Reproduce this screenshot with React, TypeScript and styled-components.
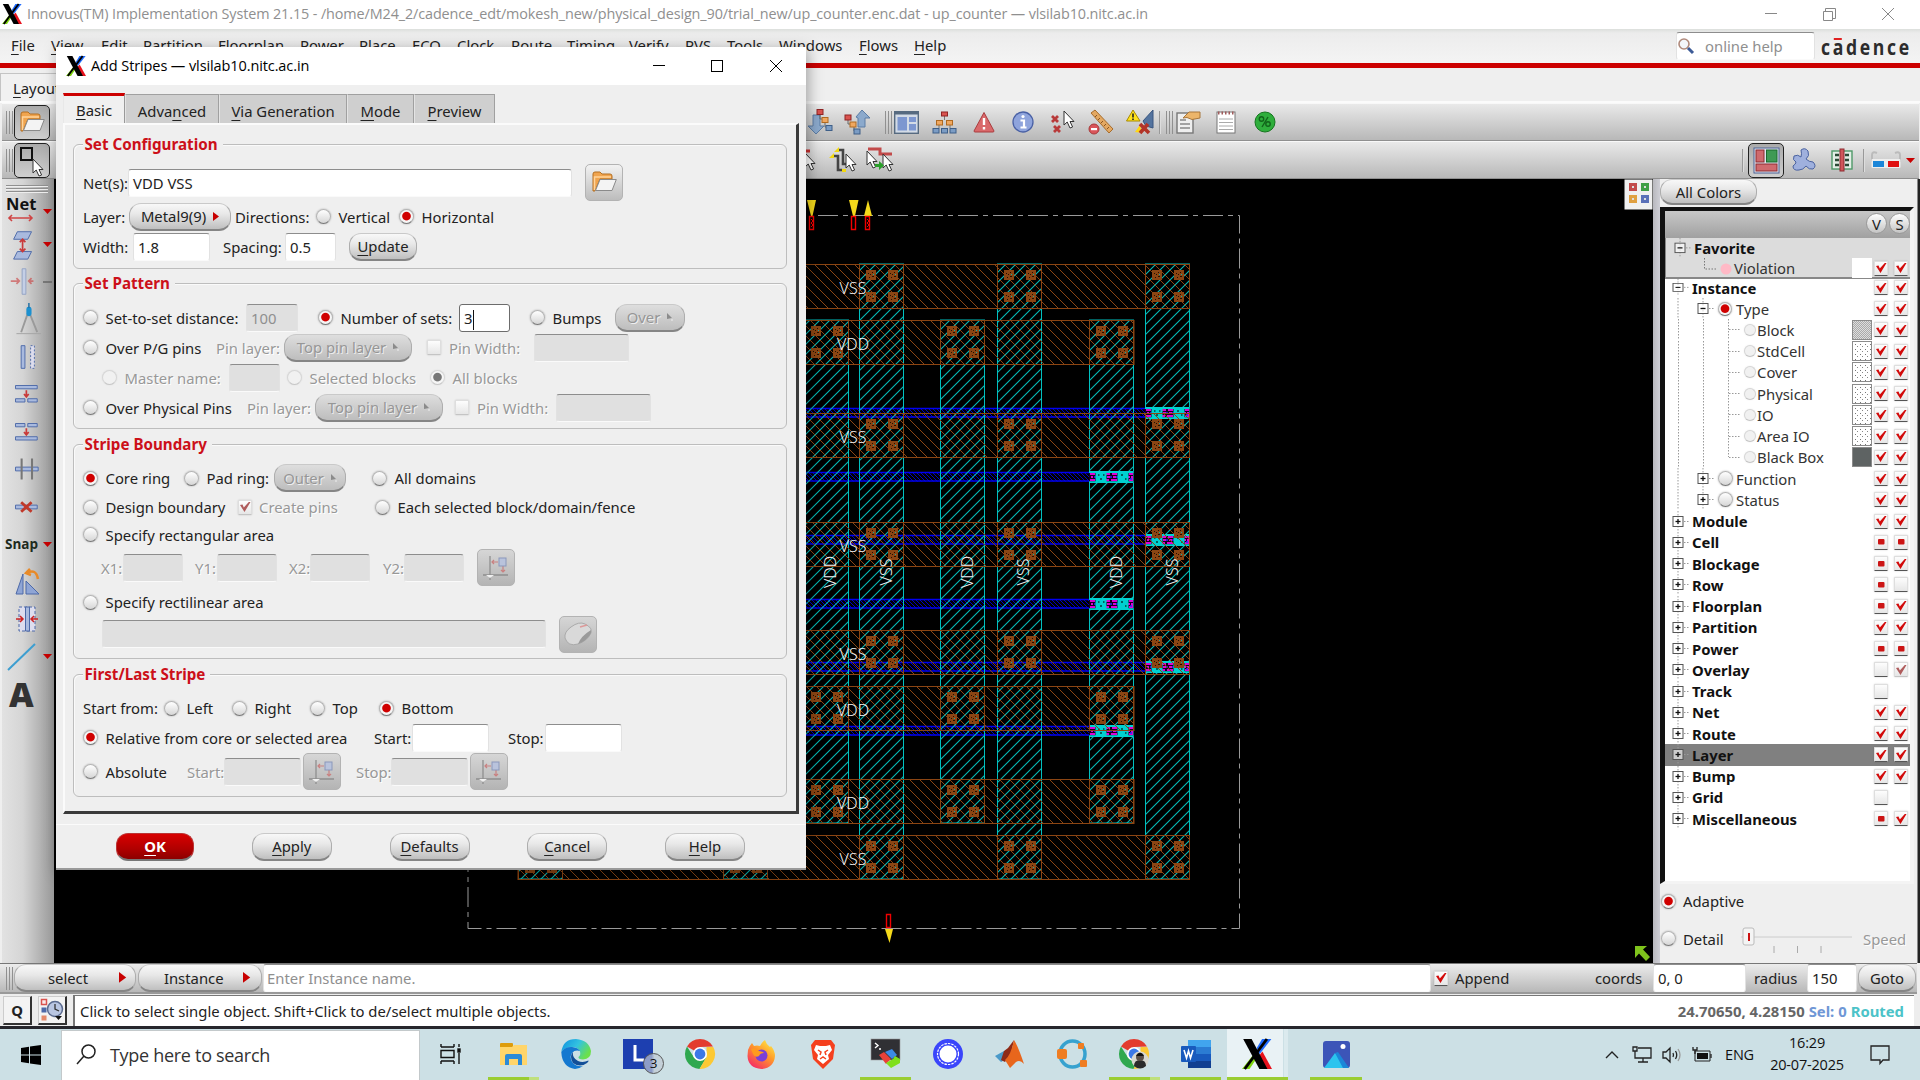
import React from 'react';
import styled, { createGlobalStyle, css } from 'styled-components';

const UI = '"Noto Sans", "Open Sans", sans-serif';
const WIN = '"Open Sans", "Noto Sans", sans-serif';

const Global = createGlobalStyle`
  * { box-sizing: border-box; }
  html, body { margin: 0; padding: 0; background: #efefef; }
  body { width: 1920px; height: 1080px; overflow: hidden; }
  svg { display: block; flex: none; overflow: visible; }
  u { text-underline-offset: 3px; text-decoration-thickness: 1px; text-decoration-skip-ink: none; }
`;

const Screen = styled.div`
  position: relative;
  width: 1920px;
  height: 1080px;
  display: flex;
  flex-direction: column;
  overflow: hidden;
  background: #efefef;
  font: 14.85px/20px ${UI};
  color: #222;
  white-space: nowrap;
`;

/* ---------- generic parts ---------- */
const Cell = styled.div<{ $w?: number; $dim?: boolean; $h?: number }>`
  flex: none;
  display: flex;
  align-items: center;
  width: ${p => (p.$w ? `${p.$w}px` : 'auto')};
  ${p => p.$h && `height: ${p.$h}px;`}
  ${p => p.$dim && 'color: #989898; text-shadow: 1px 1px 0 #fff;'}
`;
const Slot = styled(Cell)`justify-content: center;`;
const Grow = styled.div`flex: 1;`;

const Radio = styled.i<{ $on?: boolean; $dim?: boolean; $s?: number }>`
  flex: none;
  width: ${p => p.$s || 15}px;
  height: ${p => p.$s || 15}px;
  border-radius: 50%;
  border: 1px solid ${p => (p.$dim ? '#d6d6d6' : '#b4b4b4')};
  border-bottom-color: ${p => (p.$dim ? '#c6c6c6' : '#777')};
  background: ${p =>
    p.$on
      ? `radial-gradient(circle at 50% 47%, ${p.$dim ? '#777' : '#d00000'} 0 3.8px, transparent 4.8px), #f6f6f6`
      : p.$dim ? '#f1f1f1' : 'linear-gradient(#fff, #d6d6d6)'};
  box-shadow: 0 0 2px rgba(0, 0, 0, ${p => (p.$dim ? 0.08 : 0.3)});
`;

const CheckBox = styled.i<{ $dim?: boolean }>`
  flex: none;
  display: flex;
  align-items: center;
  justify-content: center;
  width: 14px;
  height: 15px;
  border-radius: 1px;
  border: 1px solid #dedede;
  border-bottom: 1px solid ${p => (p.$dim ? '#c4c4c4' : '#555')};
  background: linear-gradient(#fdfdfd, #e6e6e6);
  box-shadow: 0 0 2px rgba(0, 0, 0, 0.18);
`;

type Mark = 'v' | 's' | 'o' | 'd' | '';
const Check = ({ m = '' as Mark, dim = false }) => (
  <CheckBox $dim={dim || m === 'd'}>
    {(m === 'v' || m === 'd') && (
      <svg width="12" height="12" viewBox="0 0 12 12">
        <path d="M1 4 L3.500 3.500 L4.800 6.500 L9.800 1 H11.500 L5.500 11 Z" fill={m === 'd' ? '#b05c5c' : '#d20a0a'} />
      </svg>
    )}
    {m === 's' && (
      <svg width="8" height="6"><rect x="1" width="6.5" height="5.5" rx="1" fill="#cc1515" /></svg>
    )}
  </CheckBox>
);

const Field = styled.div<{ $w: number; $off?: boolean; $focus?: boolean; $hint?: boolean }>`
  flex: none;
  width: ${p => p.$w}px;
  height: 28px;
  padding: 0 4px;
  line-height: 26px;
  border-radius: 3px;
  border: 1px solid #e2e2e2;
  border-top: 1.5px solid #8d8d8d;
  border-bottom-color: #fafafa;
  background: ${p => (p.$off ? '#e0e0e0' : '#fff')};
  color: ${p => (p.$off || p.$hint ? '#8f8f8f' : '#222')};
  ${p => p.$focus && 'border: 1.5px solid #6c6c6c; padding-left: 4px;'}
  ${p => p.$hint && 'padding-left: 3px;'}
`;
const Caret = styled.span`
  display: inline-block;
  width: 1px;
  height: 20px;
  background: #111;
  vertical-align: middle;
`;

const Pill = styled.div<{ $w: number; $off?: boolean; $h?: number; $red?: boolean }>`
  flex: none;
  display: flex;
  align-items: center;
  justify-content: center;
  gap: 7px;
  width: ${p => p.$w}px;
  height: ${p => p.$h || 28}px;
  border-radius: 12px;
  border: 1px solid #adadad;
  border-top-color: #c9c9c9;
  border-bottom: 2px solid #858585;
  background: linear-gradient(#f8f8f8, #e8e8e8 40%, #bfbfbf);
  ${p => p.$off && 'background: linear-gradient(#dedede, #bdbdbd); color: #969696; text-shadow: 1px 1px 0 #eee;'}
  ${p => p.$red && 'background: linear-gradient(#d80000, #b00000 60%, #8c0000); color: #fff; font-weight: 700; border-color: #b33; border-bottom-color: #777;'}
`;
const PillText = styled.div<{ $w: number; $pl: number }>`width: ${p => p.$w}px; padding-left: ${p => p.$pl}px;`;
const Tri = ({ c = '#c80000', s = 1 }) => (
  <svg width={6 * s} height={9 * s} viewBox="0 0 6 9"><path d="M0 0 L6 4.5 L0 9Z" fill={c} /></svg>
);
const OffTri = () => (
  <svg width="6" height="8" viewBox="0 0 6 8"><path d="M0 0 L5 5 L0 6Z" fill="#8b8b8b" /><path d="M5 6v2" stroke="#eee" /></svg>
);
const DownTri = () => (
  <svg width="9" height="5" viewBox="0 0 9 5"><path d="M0 0H9L4.5 5Z" fill="#c80000" /></svg>
);

const IconButton = styled.div<{ $off?: boolean }>`
  flex: none;
  display: flex;
  align-items: center;
  justify-content: center;
  width: 38px;
  height: 37px;
  border-radius: 5px;
  border: 1px solid #b3b3b3;
  background: ${p => (p.$off ? 'linear-gradient(#d6d6d6, #b4b4b4)' : 'linear-gradient(#f2f2f2, #bcbcbc)')};
`;

/* ---------- icons ---------- */
const XLogo = ({ w = 20, h = 20 }) => (
  <svg width={w} height={h} viewBox="0 0 20 20">
    <path d="M0 20 L8.4 9.4 L10 12.6 L5 20Z" fill="#7fd60f" />
    <path d="M13.4 0 H19.6 L11.8 10 L9.8 6Z" fill="#1e6bff" />
    <path d="M11.5 11 L13.6 8.4 L20 20 H14.5Z" fill="#e8111c" />
    <path d="M0.8 0 H6.4 L17 20 H11.6Z" fill="#000" />
    <path d="M1.8 20 L16.6 0" stroke="#000" strokeWidth="1.9" />
  </svg>
);
const Folder = () => (
  <svg width="25" height="23" viewBox="0 0 25 23">
    <path d="M1 20 V3 Q1 1 3 1 H8 L10 3 H18 Q20 3 20 5 V8 H8 L3 20Z" fill="#f0a44e" stroke="#b36f22" />
    <path d="M2.5 19 V6 H19" fill="none" stroke="#ffd49a" strokeWidth="1.5" />
    <path d="M8 8.5 H24.3 L20 19.5 H3.5Z" fill="#f4f4f4" stroke="#8a8a8a" />
  </svg>
);
const AxisIcon = () => (
  <svg width="26" height="26" viewBox="0 0 26 26" fill="none">
    <path d="M7 1 V25 M0 20 H25" stroke="#8f8f8f" strokeWidth="1.3" />
    <path d="M7 23l-4-3h8z" fill="#f0f0f0" />
    <path d="M9 7 H15 M11 5 L9 7 L11 9 M20 11 V17 M18 15 L20 17 L22 15" stroke="#c98080" strokeWidth="1.2" />
    <rect x="16" y="3" width="7" height="8" fill="#b9c3dc" stroke="#8b98bb" />
  </svg>
);
const MouseIcon = () => (
  <svg width="30" height="26" viewBox="0 0 30 26">
    <path d="M2 17 Q1 11 8 6 Q16 0 22 3 Q30 7 28 12 Q24 20 15 23 Q5 26 2 17Z" fill="#d9d9d9" stroke="#aaa" />
    <path d="M28 12 Q24 20 15 23 Q18 15 28 9Z" fill="#9a9a9a" />
    <path d="M17 6 L24 4" stroke="#d99" strokeWidth="1.5" />
  </svg>
);
const Cursor = ({ x = 0, y = 0 }) => (
  <path transform={`translate(${x} ${y})`} d="M0 0 V14 L3.2 11 L6 17 L8.6 16 L6 10.5 H10Z" fill="#fff" stroke="#333" strokeWidth="1" />
);
const Tree = ({ up = false }) => (
  <svg width="27" height="26" viewBox="0 0 27 26">
    <path d={up ? 'M12 8 L18 1 L26 9 H21 V18 H14 V9Z' : 'M6 6 H13 V17 H17 L9 25 L1 17 H6Z'} fill="#8ba9cc" stroke="#5c7da5" />
    <path d={up ? 'M4 8 V15 H9 M10 16 V22 H13' : 'M13 4 V10 H17 M18 12 V18 H22'} fill="none" stroke="#666" />
    <rect x={up ? 1 : 10} y={up ? 6 : 0.5} width="6" height="5" fill="#d9534f" stroke="#8f2424" />
    <rect x={up ? 6 : 15} y={up ? 13 : 8.5} width="6" height="5" fill="#f0a860" stroke="#b06a20" />
    <rect x={up ? 10 : 19} y={up ? 20 : 16.5} width="6" height="5" fill="#7b9cc4" stroke="#3e5f88" />
  </svg>
);
const WindowIcon = () => (
  <svg width="25" height="23" viewBox="0 0 25 23">
    <rect x=".7" y=".7" width="23.6" height="21.6" fill="#d3dbe6" stroke="#566a80" strokeWidth="1.4" />
    <path d="M0 2 H25" stroke="#566a80" strokeWidth="3" />
    <rect x="3.5" y="6" width="9.5" height="13.5" fill="#7d97d0" /><rect x="15" y="6" width="7" height="5" fill="#7d97d0" /><rect x="15" y="13" width="7" height="6.5" fill="#7d97d0" />
  </svg>
);
const HierIcon = () => (
  <svg width="25" height="23" viewBox="0 0 25 23">
    <path d="M12.500 5V9M7 14V17M18 14V17" stroke="#777" />
    <rect x="9.500" y="1" width="6" height="4" fill="#d9534f" stroke="#8f2424" />
    {[4.5, 14.5].map(x => <rect key={x} x={x} y="9.500" width="6" height="4.500" fill="#f0a860" stroke="#b06a20" />)}
    {[1, 9.5, 18].map(x => <rect key={x} x={x} y="17.500" width="6" height="4.500" fill="#7b9cc4" stroke="#3e5f88" />)}
  </svg>
);
const WarnIcon = () => (
  <svg width="22" height="22" viewBox="0 0 22 22">
    <path d="M11 1.500 L21 20 Q21 21 20 21 H2 Q1 21 1 20Z" fill="#d9696b" stroke="#a93c3e" />
    <path d="M11 7 V14 M11 16 V18.500" stroke="#fff" strokeWidth="2.400" />
  </svg>
);
const InfoIcon = () => (
  <svg width="22" height="22" viewBox="0 0 22 22">
    <circle cx="11" cy="11" r="10" fill="#8fa4dc" stroke="#4a61a5" strokeWidth="1.300" />
    <path d="M8.500 9.500H12V16M8.500 16.500H14.500" fill="none" stroke="#fff" strokeWidth="2.200" /><circle cx="11" cy="5.500" r="1.600" fill="#fff" />
  </svg>
);
const XXIcon = () => (
  <svg width="24" height="24" viewBox="0 0 24 24">
    <path d="M2 6 L8 12 M8 6 L2 12 M4 16 L10 22 M10 16 L4 22" stroke="#b83a3a" strokeWidth="2.800" />
    <Cursor x={14} y={1} />
  </svg>
);
const RulerIcon = () => (
  <svg width="26" height="26" viewBox="0 0 26 26">
    <path d="M3 4 L7 1 L25 20 L21 24Z" fill="#e3a862" stroke="#a66c2c" />
    <path d="M9 6l-2 2M12 9l-2 2M15 12l-2 2M18 15l-2 2M21 18l-2 2" stroke="#8a5520" />
    <circle cx="6" cy="20" r="5" fill="#d9545a" stroke="#a83a3a" /><rect x="3" y="19" width="6" height="2.200" fill="#fff" />
  </svg>
);
const AlertPen = () => (
  <svg width="28" height="26" viewBox="0 0 28 26">
    <path d="M17 12 L27 1 V19 L20 17Z" fill="#54749f" stroke="#3a5680" />
    <path d="M9 23 L14 16 L16 24Z" fill="#ffd814" />
    <path d="M14 15 L23 24 M22 15 L14 24" stroke="#b23428" strokeWidth="3.600" />
    <path d="M7 1 L14 12 H0.500Z" fill="#ffe11a" stroke="#a88a00" /><path d="M7 4.500V8.500M7 9.500V11" stroke="#222" strokeWidth="1.600" />
  </svg>
);
const NoteHand = () => (
  <svg width="24" height="24" viewBox="0 0 24 24">
    <rect x="1" y="3" width="16" height="20" fill="#eee" stroke="#777" strokeWidth="1.400" />
    <path d="M4 10H10M4 14H14M4 18H14" stroke="#888" strokeWidth="1.400" />
    <path d="M7 8 L13 2 H24 V8 L16 9.500 L11 7.500Z" fill="#ecb56a" stroke="#a8763a" />
  </svg>
);
const NotePad = () => (
  <svg width="20" height="24" viewBox="0 0 20 24">
    <rect x="1" y="2" width="18" height="21" fill="#fff" stroke="#777" />
    <path d="M3 9H17M3 12.500H17M3 16H17M3 19.500H17" stroke="#aaa" /><path d="M2 3H18" stroke="#a05a5a" strokeWidth="3" strokeDasharray="1.500 2" />
  </svg>
);
const Globe = () => (
  <svg width="22" height="22" viewBox="0 0 22 22">
    <circle cx="11" cy="11" r="10" fill="#2fae3c" stroke="#16761f" /><circle cx="7.500" cy="8" r="2.200" fill="none" stroke="#11641a" strokeWidth="1.400" />
    <circle cx="14" cy="13" r="2.200" fill="none" stroke="#11641a" strokeWidth="1.400" /><path d="M14 6 L8 16" stroke="#11641a" strokeWidth="1.400" />
  </svg>
);

/* ---------- title, menu, toolbars ---------- */
const TitleBar = styled.div`
  flex: none; display: flex; align-items: center; height: 29px; background: #fff;
  padding: 0 0 1px 2px; font: 14.4px/20px ${WIN}; letter-spacing: -0.11px; color: #8f8f8f; gap: 5px;
`;
const MenuBar = styled.div`
  flex: none; display: flex; align-items: center; height: 34px; padding: 0 0 1px 11px;
  background: linear-gradient(#dcdfdc, #ececec 12%, #f4f4f4);
`;
const MenuItem = styled(Cell)`padding-bottom: 2px;`;
const Search = styled(Field)`
  display: flex; align-items: center; gap: 11px; padding: 0 1px; color: #8f8f8f; margin-right: 6px;
`;
const Brand = styled.div`
  position: relative; font: 700 22px/24px "Open Sans", sans-serif; letter-spacing: 3.3px; color: #2c2c2c; transform-origin: left; 
  transform: scaleX(0.8); width: 99px;
`;
const Macron = styled.i`position: absolute; left: 16px; top: 4px; width: 10px; height: 2px; background: #e02020;`;
const RedLine = styled.div`flex: none; height: 5px; background: #cc0000;`;
const TabStrip = styled.div`
  flex: none; display: flex; align-items: flex-end; height: 35px; background: #efefef; border-bottom: 2px solid #fbfbfb;
`;
const LayoutTab = styled.div`
  width: 60px; height: 28px; padding: 4px 0 0 12px; border: 1px solid #c4c4c4; border-bottom: 0; background: #f1f1f1;
`;
const Bar = styled.div`
  flex: none; display: flex; align-items: center; height: 38px; width: 1917px; margin-left: 2px;
  background: linear-gradient(#e9e9e9, #b8b8b8); border-bottom: 1px solid #8f8f8f; border-top: 1px solid #f8f8f8;
`;
const Grip = styled.i<{ $h?: boolean }>`
  flex: none; width: 7px; height: 23px; margin: 0 1px 0 4px;
  background: repeating-linear-gradient(90deg, #909090 0 1px, transparent 1px 3px);
  ${p => p.$h && css`width: 42px; height: 8px; background: repeating-linear-gradient(#909090 0 1px, #eee 1px 2px, transparent 2px 3px);`}
`;
const Sep = styled.i`flex: none; width: 2px; height: 23px; background: #999; border-right: 1px solid #ddd;`;
const Pressed = styled.div`
  flex: none; display: flex; align-items: center; justify-content: center; width: 36px; height: 35px;
  border: 1.5px solid #222; border-radius: 5px; background: linear-gradient(#aaa, #cfcfcf);
`;

/* ---------- body ---------- */
const Body = styled.div`flex: none; display: flex; height: 784px; width: 1920px;`;
const SideBar = styled.div`
  flex: none; display: flex; flex-direction: column; align-items: flex-start; width: 52px; margin-left: 2px; padding: 6px 0 0 0;
  background: linear-gradient(90deg, #e2e2e2, #d5d5d5 40%, #989898);
`;
const Tool = styled.div<{ $pl?: number; $h?: number; $pt?: number }>`
  display: flex; align-items: center; width: 52px; height: ${p => p.$h || 37.5}px; padding: ${p => p.$pt || 0}px 2px 0 ${p => p.$pl || 5}px;
  justify-content: space-between;
`;
const ToolText = styled.div<{ $s: number }>`
  font: ${p => (p.$s > 25 ? 800 : 700)} ${p => p.$s}px/16px "Open Sans", sans-serif; color: ${p => (p.$s > 25 ? '#333' : '#1d2a1d')};
`;
const Splitter = styled.div`flex: none; width: 7px; background: linear-gradient(90deg, #b8b8be, #cfcfd6);`;
const Viewport = styled.div`flex: none; display: flex; width: 1599px; height: 784px; background: #000;`;

const Side = styled.div`
  flex: none; width: 257px; display: flex; flex-direction: column; background: #efefef;
`;
const Edge = styled.div`flex: none; width: 3px; background: #222; border-left: 1px solid #888;`;
const TreeBox = styled.div`
  margin-top: 2px; width: 254px; height: 677px; border-left: 5px solid #111; border-top: 4px solid #111; border-right: 4px solid #f4f4f4;
  border-bottom: 3px solid #f4f4f4; background: #fff; display: flex; flex-direction: column;
`;
const TreeHead = styled.div`
  flex: none; height: 27px; background: linear-gradient(#c8c8c8, #a0a0a0); display: flex; align-items: center; justify-content: flex-end; gap: 2px;
  padding-bottom: 2px;
`;
const Knob = styled.div`
  width: 21px; height: 21px; border-radius: 50%; border: 1px solid #999; background: linear-gradient(#fff, #c4c4c4); text-align: center; line-height: 20px;
`;
const TreeRow = styled.div<{ $bg?: string; $bold?: boolean; $h?: number; $pb?: number }>`
  flex: none; display: flex; align-items: center; height: ${p => p.$h || 21.25}px; padding: 0 2px ${p => p.$pb || 0}px 0; background: ${p => p.$bg || 'transparent'};
  font-weight: ${p => (p.$bold ? 700 : 400)}; color: ${p => (p.$bold ? '#111' : '#333')};
`;
const Fav = styled.div`background: #dcdcdc; border-bottom: 2px solid #888; border-left: 1px solid #888; height: 41px;`;
const Twig = ({ l, open, mid, h = 21.25 }: { l: number; open?: boolean; mid?: boolean; h?: number }) => (
  <svg width={l + 16} height={h} viewBox={`0 0 ${l + 16} 21.25`} preserveAspectRatio="none">
    <path d={`M${l + 4} 0V21`} stroke="#999" strokeDasharray="1.5 1.5" />
    {l > 20 && mid && <path d={`M${l - 21} 0V21`} stroke="#999" strokeDasharray="1.5 1.5" />}
    <rect x={l - 1} y="5.500" width="10" height="10" fill="#fff" fillOpacity="0.6" stroke="#555" />
    <path d={`M${l + 1.5} 10.500H${l + 6.5}`} stroke="#111" strokeWidth="1.300" />
    {!open && <path d={`M${l + 4} 8V13`} stroke="#111" strokeWidth="1.300" />}
    <path d={`M${l + 10} 10.500H${l + 16}`} stroke="#999" strokeDasharray="1.5 1.5" />
  </svg>
);
const Leaf = ({ end = false }) => (
  <svg width="75" height="21.25" viewBox="0 0 75 21.25">
    <path d={`M13.500 0V21M38.500 0V21M63.500 0V${end ? 10 : 21}M64 10.500H75`} stroke="#999" strokeDasharray="1.5 1.5" fill="none" />
  </svg>
);
const Swatch = styled.i<{ $k: number }>`
  width: 20px; height: 20px; border: 1px solid #8b8b8b;
  ${p => p.$k === 1 && css`background: repeating-conic-gradient(#aaa 0 25%, #ddd 0 50%) 0 0/2px 2px;`}
  ${p => p.$k === 2 && css`background: radial-gradient(circle, #777 0.7px, transparent 1px) 0 0/5px 5px, radial-gradient(circle, #888 0.7px, transparent 1px) 2px 2px/5px 5px #fff;`}
  ${p => p.$k === 3 && css`background: #5e6363;`}
  ${p => p.$k === 4 && css`background: #fff; border-color: #fff;`}
`;
const Marks = styled.div`display: flex; gap: 6px; width: 35px; margin-left: 1px; padding-left: 1px;`;

/* ---------- lower bars ---------- */
const CmdBar = styled.div`
  flex: none; display: flex; align-items: center; height: 31px; width: 1917px; padding-left: 2px; border-top: 1px solid #777; border-bottom: 2px solid #999;
  background: linear-gradient(#ececec, #b8b8b8);
`;
const StatusBar = styled.div`
  flex: none; display: flex; align-items: center; height: 35px; background: #ededed; border-bottom: 3px solid #26262c; padding-left: 3px;
`;
const SmallBtn = styled.div`
  display: flex; align-items: center; justify-content: center; width: 29px; height: 29px; margin-right: 6px; background: #f3f3f3;
  border: 1px solid #ccc; border-right: 2px solid #333; border-bottom: 2px solid #333; font-weight: 700;
`;
const StatusText = styled.div`
  flex: none; width: 1841px; height: 31px; border-left: 2px solid #777; border-top: 1px solid #777; background: #fff; padding: 0 10px 0 5px;
  display: flex; align-items: center; justify-content: space-between;
`;
const Coord = styled.b<{ $c: string }>`color: ${p => p.$c}; margin-left: 4px;`;

/* ---------- taskbar ---------- */
const TaskBar = styled.div`
  flex: none; display: flex; height: 51px; background: #cce0e5; font-family: ${WIN}; color: #111;
`;
const StartBtn = styled(Slot)`width: 61px;`;
const TaskSearch = styled.div`
  width: 359px; margin-top: 1px; border: 1px solid #c3c9cb; border-bottom: 0; background: #fff; display: flex; align-items: center;
  padding: 0 0 2px 14px; gap: 14px; font-size: 18px; letter-spacing: -0.3px; color: #333;
`;
const TaskApp = styled.div<{ $w: number; $line?: number; $on?: boolean; $stack?: boolean }>`
  flex: none; display: flex; align-items: center; justify-content: center; position: relative; width: ${p => p.$w}px; padding-bottom: 1px;
  ${p => p.$on && 'background: linear-gradient(90deg, transparent 1px, #e9f2f5 1px, #e9f2f5 57px, transparent 57px, transparent 58px, #dbeaee 58px, #dbeaee 62px, transparent 62px);'}
  &::after { content: ''; position: absolute; left: calc(50% - ${p => (p.$stack ? 25 : (p.$line || 0) / 2)}px); bottom: 0; width: ${p => p.$line || 0}px; height: 3px;
    background: ${p => (p.$stack ? 'linear-gradient(90deg, #9acd32 41px, #bfe07c 41px)' : '#9acd32')}; }
`;
const Badge = styled.div`
  position: absolute; left: 36px; top: 24px; width: 21px; height: 21px; border-radius: 50%; border: 1px solid #555; background: linear-gradient(90deg, #8d9cc8 40%, #c4d0d8 55%); text-align: center; font: 13.5px/19px ${WIN};
`;
const Clock = styled.div`width: 90px; text-align: center; font-size: 14.5px; line-height: 22px; padding-top: 3px; letter-spacing: -0.2px;`;
const Lang = styled(Slot)`font-size: 14.5px; letter-spacing: -0.2px;`;

/* ---------- dialog ---------- */
const Dialog = styled.div`
  position: absolute; left: 56px; top: 47px; width: 750px; height: 823px; background: #efefef; box-shadow: 2px 3px 14px rgba(0, 0, 0, 0.35);
  display: flex; flex-direction: column; border-bottom: 2px solid #999;
`;
const DlgTitle = styled.div`
  flex: none; display: flex; align-items: center; height: 38px; padding-left: 10px; background: #fff; font: 14.5px/20px ${WIN}; letter-spacing: -0.1px; color: #000; gap: 5px;
`;
const Tabs = styled.div`display: flex; align-items: flex-end; height: 39px; padding-left: 7px;`;
const Tab = styled.div<{ $w: number; $on?: boolean }>`
  width: ${p => p.$w}px; height: 29px; line-height: 33px; text-align: center; background: #cfcfcf; border: 1px solid #a0a0a0; border-left-color: #e4e4e4; border-bottom: 0;
  ${p => p.$on && 'background: #f0f0f0; border-color: #e8e8e8; border-right-color: #999; border-top: 3px solid #cc0000; height: 30px; line-height: 28px;'}
`;
const Pane = styled.div`
  margin-left: 7px; width: 736px; height: 691px; border-top: 2px solid #fbfbfb; border-left: 2px solid #fbfbfb; border-right: 3px solid #3a3a3a; border-bottom: 3px solid #3a3a3a; padding: 19px 0 0 8px;
`;
const Group = styled.div<{ $h: number; $gap?: number }>`
  position: relative; width: 714px; height: ${p => p.$h}px; margin-bottom: ${p => p.$gap || 15}px; border: 1.5px solid #bdbdbd; border-radius: 6px;
  box-shadow: inset 1px 1px 0 #fafafa; padding-left: 9px;
`;
const Legend = styled.div`
  position: absolute; left: 8.5px; top: -11px; padding: 0 5px 0 2px; background: #efefef; font-weight: 700; font-size: 15.2px; color: #cc1019;
`;
const Row = styled.div<{ $h?: number; $mt?: number; $pl?: number }>`
  display: flex; align-items: center; height: ${p => p.$h || 30}px; margin-top: ${p => p.$mt || 0}px; padding-left: ${p => p.$pl || 0}px;
`;
const Buttons = styled.div`display: flex; align-items: center; margin-top: 10px; border-top: 1px solid #fbfbfb; height: 46px; padding: 1px 61px 0 60px; justify-content: space-between;`;

const Opt = ({ w, on, dim, children }: any) => (
  <Cell $w={w} $dim={dim}>
    <Cell $w={22.5}><Radio $on={on} $dim={dim} /></Cell>
    {children}
  </Cell>
);
const PinWidth = ({ w }: { w: number }) => (
  <Cell $w={w} $dim><Cell $w={22}><Check dim /></Cell>Pin Width:</Cell>
);
const Coords = ({ l, w, f }: { l: string; w: number; f: number }) => (
  <Cell $w={w} $dim><Cell $w={f}>{l}</Cell><Field $w={60} $off /></Cell>
);

const AddStripes = () => (
  <Dialog>
    <DlgTitle>
      <XLogo /><Cell $w={545}>Add Stripes — vlsilab10.nitc.ac.in</Cell>
      <svg width="140" height="14" viewBox="0 0 140 14" fill="none" stroke="#000"><path d="M12 6.500H24" /><rect x="70.500" y="1.500" width="11" height="11" /><path d="M129 1L141 13M141 1L129 13" /></svg>
    </DlgTitle>
    <Tabs>
      <Tab $w={62} $on><u>B</u>asic</Tab>
      <Tab $w={94}>Adva<u>n</u>ced</Tab>
      <Tab $w={128}><u>V</u>ia Generation</Tab>
      <Tab $w={67}><u>M</u>ode</Tab>
      <Tab $w={81}><u>P</u>review</Tab>
    </Tabs>
    <Pane>
      <Group $h={125} $gap={14}>
        <Legend>Set Configuration</Legend>
        <Row $mt={19.5} $h={37}><Cell $w={45}>Net(s):</Cell><Field $w={444}>VDD VSS</Field><Cell $w={13} /><IconButton><Folder /></IconButton></Row>
        <Row $mt={0.5}>
          <Cell $w={46}>Layer:</Cell><Pill $w={102}>Metal9(9) <Tri /></Pill><Cell $w={4} /><Cell $w={81}>Directions:</Cell>
          <Opt w={83}>Vertical</Opt><Opt on>Horizontal</Opt>
        </Row>
        <Row><Cell $w={50}>Width:</Cell><Field $w={77}>1.8</Field><Cell $w={13} /><Cell $w={62}>Spacing:</Cell><Field $w={51}>0.5</Field><Cell $w={13} /><Pill $w={68}><span><u>U</u>pdate</span></Pill></Row>
      </Group>
      <Group $h={146}>
        <Legend>Set Pattern</Legend>
        <Row $mt={19}>
          <Opt w={163}>Set-to-set distance:</Opt><Field $w={52} $off>100</Field><Cell $w={20} />
          <Opt w={141} on>Number of sets:</Opt><Field $w={51} $focus>3<Caret /></Field><Cell $w={20} />
          <Opt w={85}>Bumps</Opt><Pill $w={70} $off>Over <OffTri /></Pill>
        </Row>
        <Row>
          <Opt w={133}>Over P/G pins</Opt><Cell $w={68} $dim>Pin layer:</Cell><Pill $w={128} $off>Top pin layer <OffTri /></Pill><Cell $w={15} />
          <PinWidth w={107} /><Field $w={95} $off />
        </Row>
        <Row $pl={19}>
          <Opt w={127} dim>Master name:</Opt><Field $w={51} $off /><Cell $w={7} /><Opt w={143} dim>Selected blocks</Opt><Opt on dim>All blocks</Opt>
        </Row>
        <Row>
          <Opt w={164}>Over Physical Pins</Opt><Cell $w={68} $dim>Pin layer:</Cell><Pill $w={128} $off>Top pin layer <OffTri /></Pill><Cell $w={12} />
          <PinWidth w={101} /><Field $w={95} $off />
        </Row>
      </Group>
      <Group $h={215}>
        <Legend>Stripe Boundary</Legend>
        <Row $mt={18.5}><Opt w={101} on>Core ring</Opt><Opt w={90}>Pad ring:</Opt><Pill $w={72} $off>Outer <OffTri /></Pill><Cell $w={26} /><Opt>All domains</Opt></Row>
        <Row $h={28}><Opt w={155}>Design boundary</Opt><Cell $w={137} $dim><Cell $w={21}><Check m="d" /></Cell>Create pins</Cell><Opt>Each selected block/domain/fence</Opt></Row>
        <Row $h={27}><Opt>Specify rectangular area</Opt></Row>
        <Row $h={39} $pl={18}><Coords l="X1:" w={94} f={22} /><Coords l="Y1:" w={94} f={22} /><Coords l="X2:" w={94} f={21} /><Coords l="Y2:" w={94} f={21} /><IconButton $off><AxisIcon /></IconButton></Row>
        <Row $h={30}><Opt>Specify rectilinear area</Opt></Row>
        <Row $h={34} $pl={19}><Field $w={444} $off /><Cell $w={13} /><IconButton $off><MouseIcon /></IconButton></Row>
      </Group>
      <Group $h={123}>
        <Legend>First/Last Stripe</Legend>
        <Row $mt={18.5}><Cell $w={81}>Start from:</Cell><Opt w={68}>Left</Opt><Opt w={78}>Right</Opt><Opt w={69}>Top</Opt><Opt on>Bottom</Opt></Row>
        <Row $h={29}><Opt w={291} on>Relative from core or selected area</Opt><Cell $w={38}>Start:</Cell><Field $w={77} /><Cell $w={19} /><Cell $w={37}>Stop:</Cell><Field $w={77} /></Row>
        <Row $h={39}><Opt w={104}>Absolute</Opt><Cell $w={37} $dim>Start:</Cell><Field $w={77} $off /><Cell $w={2} /><IconButton $off><AxisIcon /></IconButton><Cell $w={15} /><Cell $w={35} $dim>Stop:</Cell><Field $w={77} $off /><Cell $w={2} /><IconButton $off><AxisIcon /></IconButton></Row>
      </Group>
    </Pane>
    <Buttons>
      <Pill $w={78} $red><span><u>O</u>K</span></Pill>
      <Pill $w={80}><span><u>A</u>pply</span></Pill>
      <Pill $w={80}><span><u>D</u>efaults</span></Pill>
      <Pill $w={80}><span><u>C</u>ancel</span></Pill>
      <Pill $w={80}><span><u>H</u>elp</span></Pill>
    </Buttons>
  </Dialog>
);

/* ---------- chip layout drawing ---------- */
const VSS_COLS = [518, 723, 859, 997, 1145];
const VDD_COLS = [804, 940, 1089];
const VSS_ROWS = [264, 413, 522, 630, 835];
const VDD_ROWS = [320, 686, 779];
const RAILS: [number, number][] = [[408, 1145], [472, 1089], [535, 1145], [599, 1089], [662, 1145], [726, 1089]];

const Via = ({ x, y }: { x: number; y: number }) => (
  <g>
    <rect x={x} y={y} width="44" height="44" fill="none" stroke="#8b4513" />
    {[6.5, 28.5].map(dx => [5.5, 27.5].map(dy => (
      <g key={`${dx}-${dy}`}>
        <rect x={x + dx} y={y + dy} width="10" height="10" fill="#8b4513" />
        <path d={`M${x + dx + 2} ${y + dy + 3.5}h1M${x + dx + 6} ${y + dy + 2.5}h1M${x + dx + 3} ${y + dy + 7.5}h1M${x + dx + 6} ${y + dy + 6.5}h2M${x + dx + 4} ${y + dy + 4.5}h1`} stroke="#201000" />
        <path d={`M${x + dx + 7} ${y + dy + 4.500}h1`} stroke="#08aeaa" />
      </g>
    )))}
  </g>
);
const RailVia = ({ x, y }: { x: number; y: number }) => (
  <g transform={`translate(${x} ${y})`}>
    <rect width="44.500" height="12" fill="#14001c" />
    <path d="M1 3h5M2 6h2M1 9h5M17 3h4M23 3h5M18 6h3M24 6h3M17 9h3M22 9h6M40 3h4M39 6h2M40 9h4M43 5v3" stroke="#dc00d4" strokeWidth="2" />
    <path d="M6 5v2M22 5v2M28 5v2M42 7v2" stroke="#2030ff" strokeWidth="1.500" />
    <rect x="6.500" width="11" height="12" fill="#00d0d0" /><rect x="28.500" width="11" height="12" fill="#00d0d0" />
    <path d="M9 4h1.500M14 4h1.500M11 8h2M32 4h2M36 8h1.500" stroke="#003c3c" strokeWidth="1.500" />
    <path d="M0 1H44.500M0 11.200H44.500" stroke="#00d0d0" strokeWidth="1.800" />
  </g>
);
const Chip = () => (
  <svg width="1599" height="784" viewBox="54 179 1599 784" fontFamily="Noto Sans, sans-serif" fontSize="16.500" fill="none">
    <defs>
      <pattern id="cy" width="10" height="10" patternUnits="userSpaceOnUse"><path d="M-1 11L11 -1M-1 1L1 -1M9 11L11 9" stroke="#04bab6" strokeWidth="1.100" /></pattern>
      <pattern id="br" width="10" height="10" patternUnits="userSpaceOnUse"><path d="M-1 -1L11 11M-1 9L1 11M9 -1L11 1" stroke="#8b4513" strokeWidth="1" /></pattern>
      <pattern id="bl" width="4" height="4" patternUnits="userSpaceOnUse"><path d="M-1 -1L5 5M-1 3L1 5M3 -1L5 1" stroke="#0000d8" strokeWidth=".9" /></pattern>
    </defs>
    {RAILS.map(([y, x]) => (
      <g key={y}>
        <rect x="518" y={y} width={x - 518} height="9.500" fill="url(#bl)" />
        <path d={`M518 ${y + 0.5}H${x}M518 ${y + 9}H${x}`} stroke="#0000f0" strokeWidth="1.300" />
      </g>
    ))}
    {VSS_COLS.map(x => <rect key={x} x={x + 0.5} y="264" width="44" height="615" fill="url(#cy)" stroke="#00c0c0" />)}
    {VDD_COLS.map(x => <rect key={x} x={x + 0.5} y="320" width="44" height="503" fill="url(#cy)" stroke="#00c0c0" />)}
    {RAILS.map(([y, x]) => <RailVia key={y} x={x} y={y - 1} />)}
    {VSS_ROWS.map(y => <rect key={y} x="518" y={y + 0.5} width="671.500" height="44" fill="url(#br)" stroke="#8b4513" />)}
    {VDD_ROWS.map(y => <rect key={y} x="560" y={y + 0.5} width="574" height="44" fill="url(#br)" stroke="#8b4513" />)}
    {VSS_ROWS.map(y => VSS_COLS.map(x => <Via key={x + '-' + y} x={x + 0.5} y={y + 0.5} />))}
    {VDD_ROWS.map(y => VDD_COLS.map(x => <Via key={x + '-' + y} x={x + 0.5} y={y + 0.5} />))}
    <path d="M818 215.500H1239.500" stroke="#9a9a9a" strokeDasharray="20 5 5 5" />
    <path d="M1239.500 215.500V928.500" stroke="#9a9a9a" strokeDasharray="20 5 5 5" strokeDashoffset="2" />
    <path d="M1239.500 928.500H468V860" stroke="#9a9a9a" strokeDasharray="20 5 5 5" strokeDashoffset="12" />
    <path d="M807 200H816L812.500 216H811ZM849 200H858.500L855 216H853Z" fill="#f4d91b" /><path d="M868 200L872 216H864Z" fill="#f4d91b" />
    <path d="M809.500 216.500h4v13h-4zM851.500 216.500h4v13h-4zM865.500 216.500h4v13h-4z" stroke="#f00000" strokeWidth="1.400" />
    <path d="M811 219l2 2-2 2 2 2-2 2M867 219l2 2-2 2 2 2-2 2" stroke="#f00000" />
    <path d="M886.500 914.500h4v13h-4z" stroke="#f00000" strokeWidth="1.400" /><path d="M885 929H893L889.500 943Z" fill="#f4d91b" />
    <g fill="#f2f2f2" textAnchor="middle" fontSize="16" fontWeight="300">
      {VSS_ROWS.map(y => <text key={y} x="853" y={y + 30}>VSS</text>)}
      {VDD_ROWS.map(y => <text key={y} x="853" y={y + 30}>VDD</text>)}
      {[830, 967, 1116].map(x => <text key={x} transform={`translate(${x + 6} 572) rotate(-90)`}>VDD</text>)}
      {[886, 1023, 1172].map(x => <text key={x} transform={`translate(${x + 6} 572) rotate(-90)`}>VSS</text>)}
    </g>
    <rect x="1624.500" y="179.500" width="28" height="30" fill="#f0f0f0" />
    {[[1629, 183, '#c24a4a'], [1641, 183, '#3f9f46'], [1629, 195, '#e0a040'], [1641, 195, '#5a70b8']].map(([x, y, c]: any) => (
      <g key={`${x}${y}`}><rect x={x} y={y} width="8" height="8" fill={c} /><rect x={x + 3} y={y + 3} width="2" height="2" fill="#ddd" /></g>
    ))}
    <path d="M1635 946H1647L1643 949.500L1650 957L1646 961L1639 953.500L1635 958Z" fill="#7fc31c" />
  </svg>
);

/* ---------- side toolbar icons ---------- */
const B = '#4d69a8';
const sideIcons: React.ReactNode[] = [
  <path key="1" d="M11 5H26L22 13H7ZM11 26H26L22 34H7Z" fill="#a9bade" stroke={B} />,
  <path key="2" d="M16 4H20V31H16Z" fill="#c4cfe6" stroke="#93a3c4" />,
  <g key="3"><path d="M22 12L15 32M24 12L32 32" stroke="#9a9a9a" strokeWidth="2" /><rect x="20.500" y="5" width="5.500" height="10" rx="2.500" fill="#1c90cf" /><path d="M23.200 1V6" stroke="#1c6a9f" strokeWidth="1.500" /><path d="M10 33.500H36" stroke="#a5a5a5" /></g>,
  <g key="4"><path d="M15 6H19V30H15Z" fill="#a9bade" stroke={B} /><path d="M25 6H29V30H25Z" fill="#dde" stroke={B} strokeDasharray="2 2" /></g>,
  <g key="5" fill="#a9bade" stroke={B}><path d="M9 9H32V12.500H9ZM9 23H19V26.500H9ZM22 23H32V26.500H22Z" /></g>,
  <g key="6" fill="#a9bade" stroke={B}><path d="M9 9H19V12.500H9ZM22 9H32V12.500H22ZM9 23H32V26.500H9Z" /></g>,
  <g key="7"><path d="M9 16H33V20H9Z" fill="#a9bade" stroke={B} /><path d="M15.500 7V29M26.500 7V29" stroke="#777" strokeWidth="2.200" /></g>,
  <g key="8"><path d="M9 16H32V20H9Z" fill="#a9bade" stroke={B} /><path d="M15 13L26 23M26 13L15 23" stroke="#c0392b" strokeWidth="3" /></g>,
];
const reds = ['M16.500 13V26M13.500 16L16.500 13L19.500 16M13.500 23L16.500 26L19.500 23', 'M4 17H13M10 14L13 17L10 20M28 17H23M26 14L23 17L26 20', '', '', 'M20.500 14V20M18 18L20.500 21L23 18', 'M20.500 14V20M18 18L20.500 21L23 18', '', ''];

const SideTools = () => (
  <SideBar>
    <Grip $h />
    <Tool $h={32.5} $pt={4}>
      <svg width="32" height="34" viewBox="0 0 32 34"><text x="-1" y="16" fontFamily="Open Sans, sans-serif" fontWeight="700" fontSize="16.500" fill="#111">Net</text><path d="M2 24H25M5 21L2 24L5 27M22 21L25 24L22 27" stroke="#cf4444" strokeWidth="1.600" fill="none" /></svg>
      <DownTri />
    </Tool>
    {sideIcons.map((ic, i) => (
      <Tool key={i}>
        <svg width="34" height="36" viewBox="0 0 36 36"><g fill="none">{ic}<path d={reds[i]} stroke="#c93a3a" strokeWidth="1.800" opacity={i === 1 ? 0.6 : 1} /></g></svg>
        {i === 0 && <DownTri />}{i === 1 && <svg width="9" height="2"><path d="M0 1H9" stroke="#777" strokeWidth="2" /></svg>}
      </Tool>
    ))}
    <Tool $pl={3}><ToolText $s={13.5}>Snap</ToolText><DownTri /></Tool>
    <Tool $pl={6}><svg width="34" height="34" viewBox="0 0 34 34"><path d="M8 29H15V9ZM18 16L31 29H18Z" fill="#8fa5d5" stroke={B} /><path d="M19 8Q28 3 30 14M22 4l-4 4l5 2" fill="none" stroke="#e88a28" strokeWidth="2.500" /></svg></Tool>
    <Tool><svg width="34" height="34" viewBox="0 0 34 34"><path d="M12 5H28V29H12Z" fill="#dde" stroke={B} strokeDasharray="3 2" /><path d="M18.500 5H22.500V29H18.500Z" fill="#a9bade" stroke={B} /><path d="M9 17H16M13 14L16 17L13 20M31 17H24M27 14L24 17L27 20" fill="none" stroke="#c22" strokeWidth="1.500" /></svg></Tool>
    <Tool $pl={5}><svg width="30" height="30" viewBox="0 0 30 30"><path d="M1 28L28 2" stroke="#3d9ed0" strokeWidth="2" /></svg><DownTri /></Tool>
    <Tool $pl={7}><ToolText $s={34}>A</ToolText></Tool>
  </SideBar>
);

/* ---------- right panel ---------- */
const mk = (s: string) => s.split('') as Mark[];
const cats: [string, string][] = [['Module', 'vv'], ['Cell', 'ss'], ['Blockage', 'sv'], ['Row', 'so'], ['Floorplan', 'sv'], ['Partition', 'vv'], ['Power', 'ss'], ['Overlay', 'od'], ['Track', 'o'], ['Net', 'vv'], ['Route', 'vv'], ['Layer', 'vv'], ['Bump', 'vv'], ['Grid', 'o'], ['Miscellaneous', 'sv']];
const MarkSet = ({ m }: { m: string }) => <Marks>{mk(m).map((k, i) => <Check key={i} m={k} />)}</Marks>;

const SidePanel = () => (
  <Side>
    <Pill $w={97} $h={26}>All Colors</Pill>
    <TreeBox>
      <TreeHead><Knob>V</Knob><Knob>S</Knob></TreeHead>
      <Fav>
        <TreeRow $bold $h={20}><Twig l={10} open h={20} /><Cell $w={2} />Favorite</TreeRow>
        <TreeRow $h={20}>
          <svg width="61" height="20"><path d="M38.500 0V11H50" stroke="#777" strokeDasharray="1.5 1.5" fill="none" /><circle cx="60" cy="11" r="5.500" fill="#ffb9c6" /></svg>
          <Cell $w={7} />Violation<Grow /><Swatch $k={4} /><MarkSet m="vv" />
        </TreeRow>
      </Fav>
      <TreeRow $bold $h={19} $pb={2}><Twig l={9} open h={17} /><Cell $w={2} />Instance<Grow /><MarkSet m="vv" /></TreeRow>
      <TreeRow><Twig l={34} open mid /><Cell $w={21}><Cell $w={3} /><Radio $on $s={14} /></Cell>Type<Grow /><MarkSet m="vv" /></TreeRow>
      {['Block', 'StdCell', 'Cover', 'Physical', 'IO', 'Area IO', 'Black Box'].map((n, i) => (
        <TreeRow key={n}><Leaf end={i === 6} /><Cell $w={17}><Cell $w={4} /><Radio $dim $s={12} /></Cell>{n}<Grow /><Swatch $k={i === 0 ? 1 : i === 6 ? 3 : 2} /><MarkSet m="vv" /></TreeRow>
      ))}
      {['Function', 'Status'].map(n => (
        <TreeRow key={n}><Twig l={34} mid /><Cell $w={21}><Cell $w={3} /><Radio $s={15} /></Cell>{n}<Grow /><MarkSet m="vv" /></TreeRow>
      ))}
      {cats.map(([n, m]) => (
        <TreeRow key={n} $bold $bg={n === 'Layer' ? '#808080' : ''}><Twig l={9} /><Cell $w={2} />{n}<Grow /><MarkSet m={m} /></TreeRow>
      ))}
    </TreeBox>
    <Row $h={34} $pl={1}><Cell $w={22}><Radio $on /></Cell>Adaptive</Row>
    <Row $h={41} $pl={1}>
      <Cell $w={22}><Radio /></Cell><Cell $w={58}>Detail</Cell>
      <svg width="111" height="30" viewBox="0 0 111 30"><path d="M0 13H111" stroke="#ccc" /><path d="M33 22V29M56.500 22V29M80 22V29" stroke="#aaa" /><rect x="2" y="4" width="11" height="17" rx="2" fill="#f4f4f4" stroke="#bbb" /><path d="M8 9V17" stroke="#c11" strokeWidth="2" /></svg>
      <Cell $w={11} /><Cell $dim>Speed</Cell>
    </Row>
  </Side>
);

/* ---------- taskbar icons ---------- */
const Chrome = ({ pic = false }) => (
  <svg width="30" height="30" viewBox="0 0 30 30">
    <path d="M15 15L2 7.500A15 15 0 0 1 28 7.500L15 8Z" fill="#e33b2e" /><path d="M2 7.500A15 15 0 0 0 14.500 30L21.500 18.500H9Z" fill="#2fa84f" /><path d="M28 7.500A15 15 0 0 1 14.500 30L21.500 18V8H28Z" fill="#fcc934" />
    <circle cx="15" cy="15" r="7" fill="#fff" /><circle cx="15" cy="15" r="5.400" fill="#3b78e7" />
    {pic && <g><circle cx="21" cy="21" r="8.500" fill="#d8d8d0" /><path d="M15 27q0-6 6-6t6 6q-6 5-12 0z" fill="#2b2b2b" /><circle cx="21" cy="18" r="4" fill="#5b5048" /><path d="M17 17q4-7 8 0z" fill="#111" /></g>}
  </svg>
);
const TaskApps = () => (
  <>
    <TaskApp $w={62}><svg width="22" height="20" viewBox="0 0 22 20" fill="none" stroke="#111" strokeWidth="1.400"><path d="M1 3V0M14 3V0M1 3H14M1 17V20M14 17V20M1 17H14M1 6.500H14V13.500H1ZM19 0V3M19 9V20" /><rect x="18" y="5" width="2" height="3" fill="#111" /></svg></TaskApp>
    <TaskApp $w={62} $line={51} $stack><svg width="27" height="25" viewBox="0 0 27 25"><path d="M0 2Q0 1 1 1H12Q13 1 13 2V5H0Z" fill="#dd9c0c" /><path d="M0 5H12L14 3H27V23H0Z" fill="#ffd56a" /><path d="M5 23V14Q5 12 7 12H20Q22 12 22 14V23H18V17H9V23Z" fill="#2b8bd8" /></svg></TaskApp>
    <TaskApp $w={63}>
      <svg width="30" height="30" viewBox="0 0 30 30">
        <defs>
          <linearGradient id="edA" x1="0" y1="0" x2="1" y2="0.500"><stop offset="0" stopColor="#0f8fe0" /><stop offset="0.550" stopColor="#33c3e0" /><stop offset="1" stopColor="#6be04a" /></linearGradient>
        </defs>
        <path d="M0.300 13Q2 0 15 0Q28 1 30 12Q30 20 22 20.500Q17 20 17.500 18Q20 16 19 12.500Q17 8 11 8Q4 8 0.300 13Z" fill="url(#edA)" />
        <path d="M0.300 13Q4 7.500 11 8Q17 8.500 19 12Q14 10.500 11 14Q8 19 12 24Q16 28 22 27Q18 30 14 30Q1 28 0.300 13Z" fill="#1478d0" />
        <path d="M12 13Q8 18 12 24Q19 29 26 24Q28 22 27.500 21.500Q22 24 17 22Q11 19 12 13Z" fill="#124f98" />
      </svg>
    </TaskApp>
    <TaskApp $w={62}><svg width="30" height="30" viewBox="0 0 30 30"><rect width="30" height="30" fill="#1d3fb0" /><path d="M12 6V21H21" fill="none" stroke="#fff" strokeWidth="3" /></svg><Badge>3</Badge></TaskApp>
    <TaskApp $w={61}><Chrome /></TaskApp>
    <TaskApp $w={62}>
      <svg width="29" height="29" viewBox="0 0 29 29">
        <defs><linearGradient id="ffA" x1="0.900" y1="0" x2="0.200" y2="1"><stop offset="0" stopColor="#fff14a" /><stop offset="0.450" stopColor="#ff9a2a" /><stop offset="1" stopColor="#f5246a" /></linearGradient></defs>
        <path d="M1 10Q3 5 5 3L7 6Q10 5 13 6Q15 2 18 0Q19 4 23 7L24 6Q28 11 28 16Q27 28 14.500 29Q1 28 0.500 16Z" fill="url(#ffA)" />
        <circle cx="14.500" cy="15.500" r="6" fill="#7a3fd8" /><path d="M4 9Q8 7 12 11Q17 12 17 13Q13 13 12 16Q8 18 6 14Z" fill="#ff9a1e" />
      </svg>
    </TaskApp>
    <TaskApp $w={62}><svg width="26" height="30" viewBox="0 0 26 30"><path d="M5 1H21L25 6L23 20L13 30L3 20L1 6Z" fill="#f5401e" /><path d="M6 6L10 7H16L20 6L22 11L18 16L19 20L13 25L7 20L8 16L4 11Z" fill="#fff" /><path d="M8 11L11 13L10 16M18 11L15 13L16 16M10 20L13 18L16 20" fill="none" stroke="#f5401e" strokeWidth="1.500" /></svg></TaskApp>
    <TaskApp $w={63} $line={51}><svg width="30" height="30" viewBox="0 0 30 30"><rect width="29" height="21" fill="#303034" stroke="#999" strokeWidth=".6" /><path d="M4 4L7 6.500L4 9M8 10H10" fill="none" stroke="#fff" strokeWidth="1.400" /><path d="M8 16L13 13L20 20L15 25Z" fill="#e8413a" /><path d="M14 13L21 10L26 16L21 20Z" fill="#3c8ae6" /><path d="M15 24L22 20L24 17L29 20V24L20 29Z" fill="#7fe01c" /></svg></TaskApp>
    <TaskApp $w={62}><svg width="30" height="30" viewBox="0 0 30 30"><circle cx="15" cy="15" r="15" fill="#3a45fb" /><circle cx="15" cy="15" r="8.500" fill="#fff" /><circle cx="15" cy="15" r="10.500" fill="none" stroke="#fff" strokeDasharray="2.500 1" strokeWidth="1.200" /></svg></TaskApp>
    <TaskApp $w={62}><svg width="30" height="28" viewBox="0 0 30 28"><path d="M0 16L9 11L13 18L6 22Z" fill="#4a9ac9" /><path d="M9 11L13 8L19 0L16 14L10 22L6 20Z" fill="#8e2b17" /><path d="M19 0Q23 6 29 24Q25 19 21 22L15 28L10 20Q16 15 19 0Z" fill="#e8661c" /></svg></TaskApp>
    <TaskApp $w={62}><svg width="31" height="30" viewBox="0 0 31 30"><ellipse cx="15.500" cy="15" rx="12.500" ry="13" fill="none" stroke="#37a2cf" strokeWidth="3.500" /><rect y="10" width="10" height="10" rx="2" fill="#ef7d22" /><rect x="21" y="4" width="6" height="6" rx="1" fill="#ef7d22" /><rect x="23" y="21" width="7" height="7" rx="1" fill="#ef7d22" /></svg></TaskApp>
    <TaskApp $w={62} $line={51} $stack><Chrome pic /></TaskApp>
    <TaskApp $w={61} $line={51}><svg width="30" height="28" viewBox="0 0 30 28"><path d="M7 0H30V7H7Z" fill="#41a5ee" /><path d="M7 7H30V14H7Z" fill="#2b7cd3" /><path d="M7 14H30V21H7Z" fill="#185abd" /><path d="M7 21H30V28H7Z" fill="#103f91" /><rect y="6" width="15" height="16" rx="1" fill="#185abd" /><path d="M3 10L5.500 18L7.500 11L9.500 18L12 10" fill="none" stroke="#fff" strokeWidth="1.600" /></svg></TaskApp>
    <TaskApp $w={62} $line={61} $on><XLogo w={30} h={30} /></TaskApp>
    <TaskApp $w={96} $line={52}><svg width="27" height="27" viewBox="0 0 27 27"><rect width="27" height="27" rx="3" fill="#3c55b8" /><path d="M1 27L12 12L26 27Z" fill="#2bc4ee" /><path d="M12 12L20 27H26L15 11Z" fill="#1b87d8" /><circle cx="20" cy="5.500" r="2.500" fill="#fff" /></svg></TaskApp>
  </>
);

const menus: [string, string, number][] = [['F', 'ile', 40], ['V', 'iew', 50], ['E', 'dit', 42], ['P', 'artition', 75], ['F', 'loorplan', 82], ['P', 'ower', 59], ['P', 'lace', 53], ['E', 'CO', 45], ['C', 'lock', 54], ['R', 'oute', 56], ['T', 'iming', 62], ['V', 'erify', 56], ['P', 'VS', 42], ['T', 'ools', 52], ['W', 'indows', 80], ['F', 'lows', 55], ['H', 'elp', 60]];

const App = () => (
  <Screen>
    <Global />
    <TitleBar>
      <XLogo w={20} h={20} />
      <span>Innovus(TM) Implementation System 21.15 - /home/M24_2/cadence_edt/mokesh_new/physical_design_90/trial_new/up_counter.enc.dat - up_counter — vlsilab10.nitc.ac.in</span>
      <Grow />
      <svg width="172" height="14" viewBox="0 0 172 14" fill="none" stroke="#888"><path d="M17 6.500H29" /><path d="M75.500 4.500H84.500V13.500H75.500ZM77.500 4V1.500H87.500V11.500H85" /><path d="M134 1L146 13M146 1L134 13" /></svg>
    </TitleBar>
    <MenuBar>
      {menus.map(([a, b, w], i) => <MenuItem key={i} $w={w}><span><u>{a}</u>{b}</span></MenuItem>)}
      <Grow />
      <Search $w={139}><svg width="16" height="16" viewBox="0 0 16 16"><circle cx="6" cy="6" r="5" fill="#f4f6fa" stroke="#b08a7c" strokeWidth="1.600" /><path d="M10 10L15 15" stroke="#3c5a96" strokeWidth="3" /></svg>online help</Search>
      <Brand>cadence<Macron /></Brand>
    </MenuBar>
    <RedLine />
    <TabStrip><LayoutTab><u>L</u>ayout</LayoutTab></TabStrip>
    <Bar>
      <Grip /><Pressed><Folder /></Pressed><Cell $w={753} />
      <Slot $w={35}><Tree /></Slot><Slot $w={39}><Tree up /></Slot><Cell $w={4} />
      <Grip /><Slot $w={27}><WindowIcon /></Slot><Slot $w={49}><HierIcon /></Slot><Slot $w={30}><WarnIcon /></Slot><Slot $w={48}><InfoIcon /></Slot>
      <Slot $w={30}><XXIcon /></Slot><Slot $w={47}><RulerIcon /></Slot><Slot $w={32}><AlertPen /></Slot><Cell $w={3} /><Sep /><Cell $w={1} />
      <Grip /><Slot $w={27}><NoteHand /></Slot><Slot $w={50}><NotePad /></Slot><Slot $w={28}><Globe /></Slot>
    </Bar>
    <Bar>
      <Grip /><Pressed><svg width="26" height="28" viewBox="0 0 26 28"><rect x="2" y="2" width="11" height="12" fill="none" stroke="#111" strokeWidth="2" /><Cursor x={14} y={13} /></svg></Pressed><Cell $w={748} />
      <Slot $w={24}><svg width="20" height="24" viewBox="0 0 20 24"><path d="M0 3H10" stroke="#c33" strokeWidth="3" /><Cursor x={5} y={5} /></svg></Slot><Slot $w={40}><svg width="27" height="26" viewBox="0 0 27 26"><path d="M4 9H9V23H13M10 3H14V17H18" fill="none" stroke="#444" strokeWidth="2.600" /><path d="M0 11L5 6V11ZM5 5L10 0V5ZM13 22H17V25H13Z" fill="#f2d80f" /><Cursor x={17} y={7} /></svg></Slot>
      <Slot $w={36}><svg width="28" height="26" viewBox="0 0 28 26"><path d="M2 2H14V7H26" fill="none" stroke="#c24a4a" strokeWidth="3" /><Cursor x={1} y={4} /><Cursor x={17} y={7} /><path d="M9 17H13V14L18 18.500L13 23V20H9Z" fill="#2b9f2b" /></svg></Slot>
      <Grow /><Sep /><Cell $w={4} /><Pressed><svg width="27" height="27" viewBox="0 0 27 27"><rect x="1" y="1" width="25" height="25" fill="#dfe4ee" stroke="#4d6296" /><rect x="3" y="3" width="8" height="12" fill="#cf6a6e" stroke="#8f2b30" /><rect x="13.500" y="3" width="10.500" height="12" fill="#3f9a55" stroke="#1b6a2d" /><rect x="3" y="17" width="21" height="7" fill="#cf6a6e" stroke="#8f2b30" /></svg></Pressed>
      <Slot $w={39}><svg width="24" height="24" viewBox="0 0 24 24"><path d="M9 2Q13-1 16 3Q18 8 14 11Q17 14 21 14Q25 18 21 21Q17 22 14 18Q11 22 7 22Q1 23 1 18Q4 16 4 14Q0 12 2 8Q6 6 9 9Q10 6 9 2Z" fill="#9fb0dd" stroke="#4a62a0" /></svg></Slot>
      <Slot $w={38}><svg width="22" height="24" viewBox="0 0 22 24"><rect x="1" y="3" width="20" height="18" fill="#e4eee6" stroke="#4f9968" strokeWidth="1.400" /><path d="M4 7H8M4 12H8M4 17H8M14 7H18M14 12H18M14 17H18" stroke="#2b4a35" strokeWidth="2.400" /><rect x="9" y="1" width="4" height="22" fill="#d0565a" stroke="#8f2b30" /></svg></Slot>
      <Cell $w={2} /><Sep /><Slot $w={41}><svg width="30" height="20" viewBox="0 0 30 20"><path d="M1 12V5Q1 1 6 3M29 12V5Q29 1 24 3" fill="none" stroke="#bbb" strokeWidth="2" /><rect x=".5" y="9" width="29" height="9" rx="1" fill="#eee" /><rect x="2" y="11" width="11" height="6" fill="#1c86d8" /><rect x="17" y="11" width="11" height="6" fill="#e01010" /></svg></Slot><DownTri /><Cell $w={4} />
    </Bar>
    <Body>
      <SideTools />
      <Viewport><Chip /></Viewport>
      <Splitter />
      <SidePanel />
      <Edge />
    </Body>
    <CmdBar>
      <Grip /><Pill $w={122}><PillText $w={88} $pl={24}>select</PillText><Tri s={1.2} /></Pill><Cell $w={2} /><Pill $w={124}><PillText $w={86} $pl={14}>Instance</PillText><Tri s={1.2} /></Pill>
      <Cell $w={1} /><Field $w={1168} $hint>Enter Instance name.</Field><Cell $w={24}><Cell $w={3} /><Check m="v" /></Cell><Cell $w={140}>Append</Cell>
      <Cell $w={58}>coords</Cell><Field $w={93}>0, 0</Field><Cell $w={8} /><Cell $w={53}>radius</Cell><Field $w={50}>150</Field><Cell $w={1} /><Pill $w={58}>Goto</Pill>
    </CmdBar>
    <StatusBar>
      <SmallBtn>Q</SmallBtn>
      <SmallBtn><svg width="24" height="24" viewBox="0 0 24 24"><rect x="1.500" y="1.500" width="5" height="5" fill="#fbe9e9" stroke="#d9534f" strokeWidth="1.500" /><rect x="1.500" y="9.500" width="5" height="5" fill="#4d69a8" /><rect x="1.500" y="17.500" width="5" height="5" fill="#e58a6a" /><circle cx="15" cy="11" r="7.500" fill="#b9c6e2" stroke="#5b6b8f" strokeWidth="1.500" /><path d="M15 6V11L19 13" fill="none" stroke="#333" strokeWidth="1.300" /><path d="M15 18H22L18.500 22Z" fill="#111" /></svg></SmallBtn>
      <StatusText>
        <span>Click to select single object. Shift+Click to de/select multiple objects.</span>
        <span><Coord $c="#666">24.70650, 4.28150</Coord><Coord $c="#6f97d6">Sel: 0</Coord><Coord $c="#4cc3c8">Routed</Coord></span>
      </StatusText>
    </StatusBar>
    <TaskBar>
      <StartBtn><svg width="20" height="20" viewBox="0 0 20 20" fill="#000"><path d="M0 3L8 1.800V9.500H0ZM9 1.600L20 0V9.500H9ZM0 10.500H8V18.200L0 17ZM9 10.500H20V20L9 18.400Z" /></svg></StartBtn>
      <TaskSearch><svg width="20" height="21" viewBox="0 0 20 21" fill="none" stroke="#222" strokeWidth="1.500"><circle cx="12.500" cy="7.500" r="6.500" /><path d="M8 12L1 20" /></svg>Type here to search</TaskSearch>
      <TaskApps />
      <Grow />
      <Slot $w={28}><svg width="14" height="8" fill="none" stroke="#222" strokeWidth="1.400"><path d="M1 7L7 1L13 7" /></svg></Slot>
      <Slot $w={31}><svg width="20" height="17" viewBox="0 0 20 17" fill="none" stroke="#222" strokeWidth="1.300"><path d="M6 2H19V12H3V8M11 12V16M6 16H16M1 1H5V5H1ZM3 5V8" /></svg></Slot>
      <Slot $w={29}><svg width="20" height="16" viewBox="0 0 20 16" fill="none" stroke="#222" strokeWidth="1.300"><path d="M1 5H4L8 1V15L4 11H1ZM11 6Q12 8 11 10M13.500 4Q16 8 13.500 12" /><path d="M16 2Q20 8 16 14" stroke="#999" /></svg></Slot>
      <Slot $w={31}><svg width="20" height="15" viewBox="0 0 20 15"><path d="M3 4H18V14H3Z" fill="none" stroke="#222" /><path d="M5 6H16V12H5Z" fill="#111" /><path d="M1 0V3H5V0M3 3V7M19 7V11" stroke="#222" strokeWidth="1.300" fill="none" /></svg></Slot>
      <Lang $w={45}>ENG</Lang>
      <Clock>16:29<br />20-07-2025</Clock>
      <Slot $w={56}><svg width="20" height="20" viewBox="0 0 20 20" fill="none" stroke="#222" strokeWidth="1.300"><path d="M1 1H19V15H13L10 18.500V15H1Z" /></svg></Slot>
      <Cell $w={12} />
    </TaskBar>
    <AddStripes />
  </Screen>
);

export default App;
